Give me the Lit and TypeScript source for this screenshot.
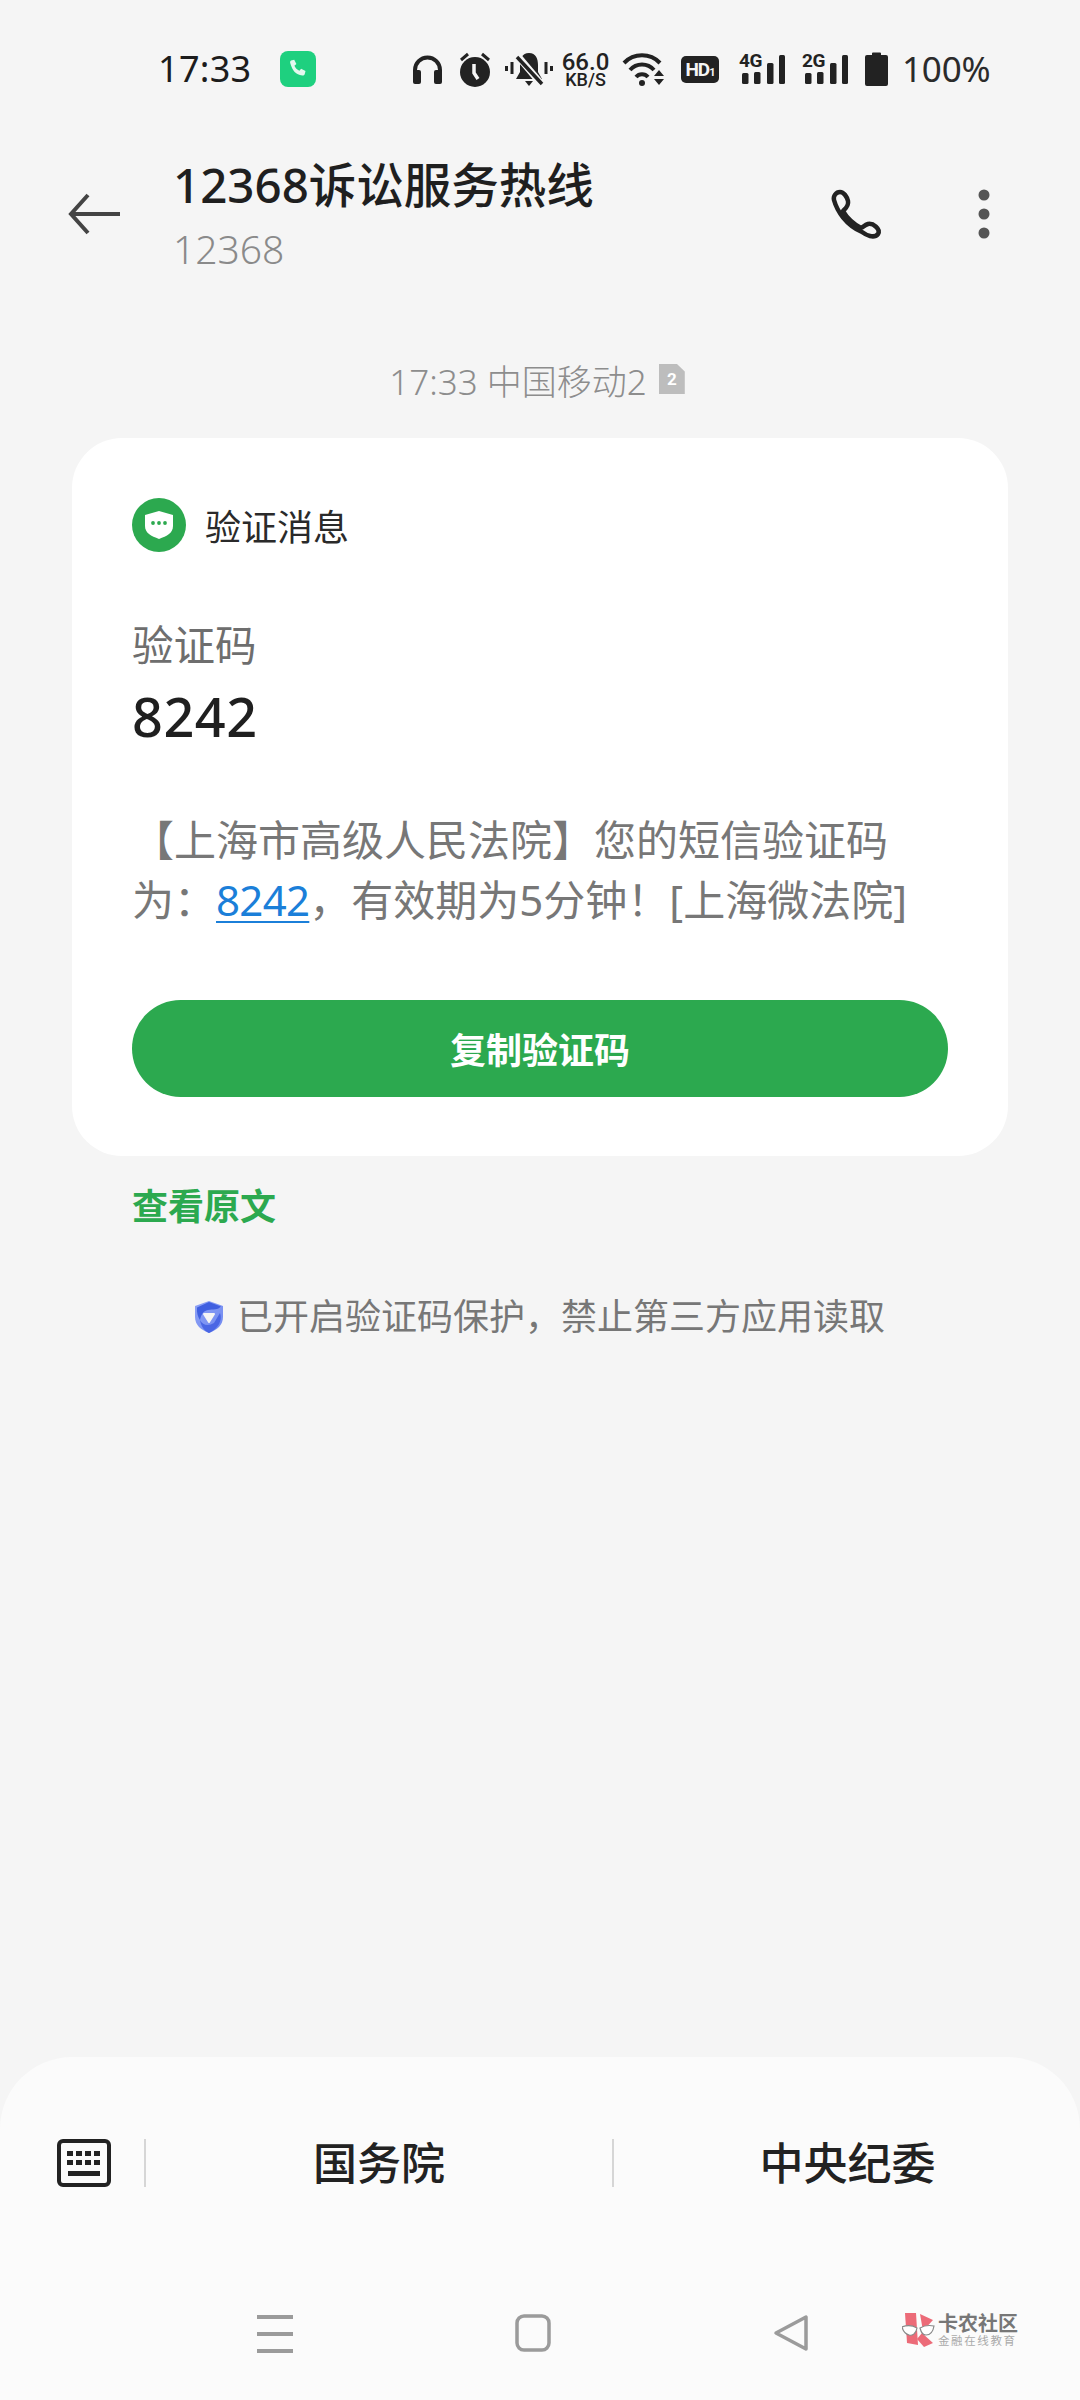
import { LitElement, html, css } from "lit";
import { customElement } from "lit/decorators.js";

const signal = (label: string) => html`<span class="sig">
  <span class="sig-l">${label}</span>
  <svg class="sig-b" width="46" height="32" viewBox="0 0 46 32" fill="#222">
    <rect x="3" y="20" width="6.500" height="11" rx="1.500"/><rect x="15" y="19" width="6.500" height="12" rx="1.500"/>
    <rect x="28" y="10" width="6.500" height="21" rx="1.500"/><rect x="40" y="2" width="6" height="29" rx="1.500"/>
  </svg>
</span>`;

@customElement("app-root")
export class AppRoot extends LitElement {
  static styles = css`
    :host { display: block; width: 1080px; height: 2400px; background: #f5f5f5; font-family: "Noto Sans", "Noto Sans CJK SC", sans-serif; overflow: hidden; }
    .page { position: relative; height: 2400px; display: flex; flex-direction: column; }
    .status { height: 70px; margin-top: 34px; display: flex; align-items: center; padding-left: 158px; color: #1c1c1c; }
    .clock { font-size: 36px; line-height: 1; width: 122px; letter-spacing: .3px; flex: none; }
    .callchip { width: 36px; height: 36px; border-radius: 8px; background: #1ed07f; display: flex; align-items: center; justify-content: center; flex: none; }
    .sicons { margin-left: 96px; display: flex; align-items: center; flex: 1; }
    .sicons svg { flex: none; }
    .m-alarm { margin-left: 16px; }
    .m-bell { margin-left: 14px; }
    .m-wifi { margin-left: 13px; }
    .rate { display: flex; flex-direction: column; align-items: center; margin-left: 9px; width: 47px; color: #222; flex: none; }
    .rate b { font: 500 24px/20px "Roboto", sans-serif; }
    .rate i { font: 500 18px/15px "Roboto", sans-serif; font-style: normal; }
    .hd { margin-left: 16px; width: 38px; height: 27px; border-radius: 5px; background: #222; color: #f5f5f5; font: 700 19px/27px "Roboto", sans-serif; text-align: center; letter-spacing: -1px; flex: none; }
    .hd small { font-size: 11px; }
    .sig { position: relative; display: inline-flex; width: 46px; height: 32px; margin-left: 20px; flex: none; }
    .sig + .sig { margin-left: 17px; }
    .sig-l { position: absolute; left: 0; top: -1px; font: 700 19px/18px "Roboto", sans-serif; color: #222; letter-spacing: -.5px; }
    .sig-b { position: absolute; left: 0; top: 0; }
    .batt { margin-left: 17px; }
    .pct { margin: -2px 0 0 14px; font-size: 35px; line-height: 1; color: #2b2b2b; letter-spacing: -.2px; }

    .head { height: 136px; margin-top: 42px; display: flex; align-items: center; padding: 0 90px 0 68px; }
    .back { width: 54px; height: 44px; flex: none; }
    .titles { margin-left: 51px; flex: 1; display: flex; flex-direction: column; }
    .title { font-size: 47.500px; line-height: 70px; font-weight: 500; color: #1f1f1f; }
    .sub { font-size: 39px; line-height: 58px; font-weight: 300; color: #8a8a8a; }
    .call { width: 54px; height: 54px; margin-right: 94px; flex: none; }
    .dots { width: 12px; height: 50px; flex: none; }

    .stamp { margin-top: 73px; height: 48px; display: flex; align-items: center; justify-content: center; gap: 4px; font-size: 35px; font-weight: 300; color: #8d8d8d; padding-right: 6px; }
    .sim { display: inline-block; width: 26px; height: 30px; background: #bdbdbd; clip-path: polygon(0 0, 70% 0, 100% 25%, 100% 100%, 0 100%); color: #fff; font: 700 17px/30px "Roboto", sans-serif; text-align: center; margin-left: 8px; }

    .card { margin: 35px 72px 0; height: 718px; box-sizing: border-box; background: #fff; border-radius: 50px; padding: 60px 60px 0; display: flex; flex-direction: column; }
    .ctype { display: flex; align-items: center; gap: 19px; height: 54px; font-size: 36px; color: #2a2a2a; }
    .label { margin-top: 63px; font-size: 41.500px; line-height: 60px; color: #6e6e6e; }
    .code { margin-top: 9px; font-size: 54px; line-height: 64px; font-weight: 500; color: #1f1f1f; letter-spacing: .5px; }
    .msg { margin-top: 62px; font-size: 42px; line-height: 60px; color: #777; width: 816px; }
    .msg a { color: #1b7fd9; text-decoration: underline; text-decoration-thickness: 2px; text-underline-offset: 5px; letter-spacing: -.7px; }
    .btn { margin-top: 70px; height: 97px; border-radius: 49px; background: #2ca94f; color: #fff; font-size: 36px; font-weight: 700; display: flex; align-items: center; justify-content: center; }

    .orig { margin: 26px 0 0 132px; font-size: 36px; line-height: 50px; color: #2ca94f; font-weight: 700; }
    .guard { margin-top: 60px; display: flex; align-items: center; justify-content: center; gap: 12px; font-size: 36px; line-height: 50px; color: #777; padding-right: 2px; }

    .panel { margin-top: auto; height: 343px; background: #fbfbfb; border-radius: 72px 72px 0 0; display: flex; flex-direction: column; }
    .suggest { margin-top: 82px; height: 48px; display: flex; align-items: center; padding-left: 57px; }
    .kb { width: 54px; height: 48px; flex: none; }
    .sep { width: 2px; height: 48px; background: #d6d6d6; flex: none; }
    .s1 { margin-left: 33px; }
    .chip { font-size: 44px; line-height: 48px; font-weight: 500; color: #222; text-align: center; flex: none; width: 466px; }
    .chip.two { width: 467px; }
    .nav { margin-top: 127px; height: 60px; display: flex; }
    .nav svg { flex: none; }
    .n1 { margin-left: 257px; }
    .n2 { margin-left: 222px; }
    .n3 { margin-left: 222px; }

    .mark { position: absolute; left: 902px; top: 2312px; display: flex; align-items: center; gap: 2px; }
    .mark-t { display: flex; flex-direction: column; align-items: flex-start; }
    .mark-a { font-size: 20px; line-height: 21px; font-weight: 700; color: #777; white-space: nowrap; }
    .mark-b { font-size: 11.500px; line-height: 14px; color: #aaa; letter-spacing: 1.600px; white-space: nowrap; }
  `;

  render() {
    return html`<div class="page">
      <div class="status">
        <span class="clock">17:33</span>
        <span class="callchip"><svg width="24" height="24" viewBox="0 0 24 24"><path d="M5 3.500l3.200-.8 2.200 4.400-2 1.700c1 2.300 2.600 3.900 5 5l1.700-2 4.400 2.200-.8 3.200c-.4 1-1.400 1.500-2.500 1.300C9.900 17.500 6.500 14 4.200 6c-.2-1.100 0-2 .8-2.500z" fill="#e4f8ee"/></svg></span>
        <span class="sicons">
          <svg width="31" height="29" viewBox="0 0 31 29"><path d="M3 20v-5a12.500 12.500 0 0 1 25 0v5" fill="none" stroke="#222" stroke-width="4"/><rect x="1" y="15" width="8" height="14" rx="2" fill="#222"/><rect x="22" y="15" width="8" height="14" rx="2" fill="#222"/></svg>
          <svg class="m-alarm" width="32" height="35" viewBox="0 0 32 35"><circle cx="16" cy="20" r="15" fill="#222"/><path d="M15 12v9l4 6" stroke="#f5f5f5" stroke-width="3.500" fill="none"/><path d="M2 8l7-6M30 8l-7-6" stroke="#222" stroke-width="3"/></svg>
          <svg class="m-bell" width="48" height="34" viewBox="0 0 48 34"><path d="M24 1c-7 0-9 6-9 12v7l-4 7h26l-4-7v-7c0-6-2-12-9-12z" fill="#222"/><path d="M20 29h8l-4 5z" fill="#222"/><path d="M1.500 14v5M7 10v12M46.500 14v5M41 10v12" stroke="#222" stroke-width="3"/><path d="M11 2l27 32" stroke="#f5f5f5" stroke-width="7"/><path d="M12 5l25 27" stroke="#222" stroke-width="3.500"/></svg>
          <span class="rate"><b>66.0</b><i>KB/S</i></span>
          <svg class="m-wifi" width="43" height="34" viewBox="0 0 43 34"><g fill="none" stroke="#222" stroke-width="4"><path d="M2 11a25 25 0 0 1 36 0"/><path d="M8 18a16 16 0 0 1 24 0"/><path d="M14 25a8 8 0 0 1 12 0"/></g><circle cx="20" cy="31" r="3" fill="#222"/><path d="M32 24l5-6 5 6zM32 27h10l-5 6z" fill="#222"/></svg>
          <span class="hd">HD<small>1</small></span>
          ${signal("4G")}
          ${signal("2G")}
          <svg class="batt" width="23" height="34" viewBox="0 0 23 34"><path d="M7 1.500a1 1 0 0 1 1-1h7a1 1 0 0 1 1 1V3h5a2 2 0 0 1 2 2v27a2 2 0 0 1-2 2H2a2 2 0 0 1-2-2V5a2 2 0 0 1 2-2h5z" fill="#222"/></svg>
          <span class="pct">100%</span>
        </span>
      </div>

      <div class="head">
        <svg class="back" viewBox="0 0 54 44"><path d="M52 22H4M20 3L3 22l17 19" fill="none" stroke="#444" stroke-width="4"/></svg>
        <div class="titles">
          <div class="title">12368诉讼服务热线</div>
          <div class="sub">12368</div>
        </div>
        <svg class="call" viewBox="0 0 54 54"><path d="M10 5C6 5 3 9 4 13c3 11 12 25 28 32 4 3 12 7 16 2 3-5-5-11-10-10-3 1-5 3-7 4-7-4-14-10-18-17 2-2 6-5 5-10-1-4-4-9-8-9z" fill="none" stroke="#222" stroke-width="4.500" stroke-linejoin="round"/></svg>
        <svg class="dots" viewBox="0 0 12 50"><circle cx="6" cy="6" r="5.500" fill="#555"/><circle cx="6" cy="25" r="5.500" fill="#555"/><circle cx="6" cy="44" r="5.500" fill="#555"/></svg>
      </div>

      <div class="stamp"><span>17:33&nbsp;中国移动2</span><span class="sim">2</span></div>

      <div class="card">
        <div class="ctype">
          <svg width="54" height="54" viewBox="0 0 54 54"><circle cx="27" cy="27" r="27" fill="#2ca94f"/><path d="M27 13l14 4v11c0 7-6 10-14 13-8-3-14-6-14-13V17z" fill="#fff"/><circle cx="21" cy="25" r="1.900" fill="#2ca94f"/><circle cx="27" cy="25" r="1.900" fill="#2ca94f"/><circle cx="33" cy="25" r="1.900" fill="#2ca94f"/></svg>
          <span>验证消息</span>
        </div>
        <div class="label">验证码</div>
        <div class="code">8242</div>
        <div class="msg">【上海市高级人民法院】您的短信验证码为：<a>8242</a>，有效期为5分钟！[上海微法院]</div>
        <div class="btn">复制验证码</div>
      </div>

      <div class="orig">查看原文</div>
      <div class="guard">
        <svg width="32" height="34" viewBox="0 0 32 34"><defs><linearGradient id="g" x1="0" y1="0" x2="1" y2="1"><stop offset="0" stop-color="#8ea2f5"/><stop offset="1" stop-color="#6f88f0"/></linearGradient></defs><path d="M16 1l14 5v11c0 8-6 13-14 16C8 30 2 25 2 17V6z" fill="url(#g)"/><path d="M16 2l12 4.500C25 10 20 9 15 10c-5 1-7 5-8 10C5 17 3.500 13 4 7.500z" fill="#3f5fe0"/><path d="M7 20c3 6 9 6 14 3l6-10c3 7-2 16-11 20-5-2-8-7-9-13z" fill="#4a66e4"/><path d="M11 14h10l-5 8z" fill="#f5f5f5" stroke="#f5f5f5" stroke-width="2" stroke-linejoin="round"/></svg>
        <span>已开启验证码保护，禁止第三方应用读取</span>
      </div>

      <div class="panel">
        <div class="suggest">
          <svg class="kb" viewBox="0 0 54 48"><rect x="2" y="2" width="50" height="44" rx="4" fill="none" stroke="#222" stroke-width="4"/><g fill="#222"><rect x="10" y="12" width="6" height="5"/><rect x="19" y="12" width="6" height="5"/><rect x="28" y="12" width="6" height="5"/><rect x="37" y="12" width="6" height="5"/><rect x="10" y="21" width="6" height="5"/><rect x="19" y="21" width="6" height="5"/><rect x="28" y="21" width="6" height="5"/><rect x="37" y="21" width="6" height="5"/><rect x="11" y="32" width="32" height="5"/></g></svg>
          <span class="sep s1"></span>
          <span class="chip">国务院</span>
          <span class="sep"></span>
          <span class="chip two">中央纪委</span>
        </div>
        <div class="nav">
          <svg class="n1" width="36" height="40" viewBox="0 0 36 40"><path d="M0 3h36M0 20h36M0 37h36" stroke="#9b9b9b" stroke-width="4"/></svg>
          <svg class="n2" width="36" height="38" viewBox="0 0 36 38"><rect x="2" y="2" width="32" height="34" rx="7" fill="none" stroke="#9b9b9b" stroke-width="3.500"/></svg>
          <svg class="n3" width="36" height="38" viewBox="0 0 36 38"><path d="M33 3v32L3 19z" fill="none" stroke="#9b9b9b" stroke-width="3.500" stroke-linejoin="round"/></svg>
        </div>
      </div>

      <div class="mark">
        <svg width="34" height="36" viewBox="0 0 34 36"><path d="M3 1h11l2 32-11-2z" fill="#ec6b78"/><path d="M18 2l13 6-10 11zM20 21l11 10-9 4-7-8z" fill="#ec6b78"/><path d="M0 15c5-2 10-2 15 1-1 6-5 8-8 7-4-1-6-4-7-8zM18 16c5-3 9-3 14-2-1 6-4 9-8 9-3 0-5-3-6-7z" fill="#fff" stroke="#888" stroke-width="1.200"/></svg>
        <span class="mark-t"><span class="mark-a">卡农社区</span><span class="mark-b">金融在线教育</span></span>
      </div>
    </div>`;
  }
}
